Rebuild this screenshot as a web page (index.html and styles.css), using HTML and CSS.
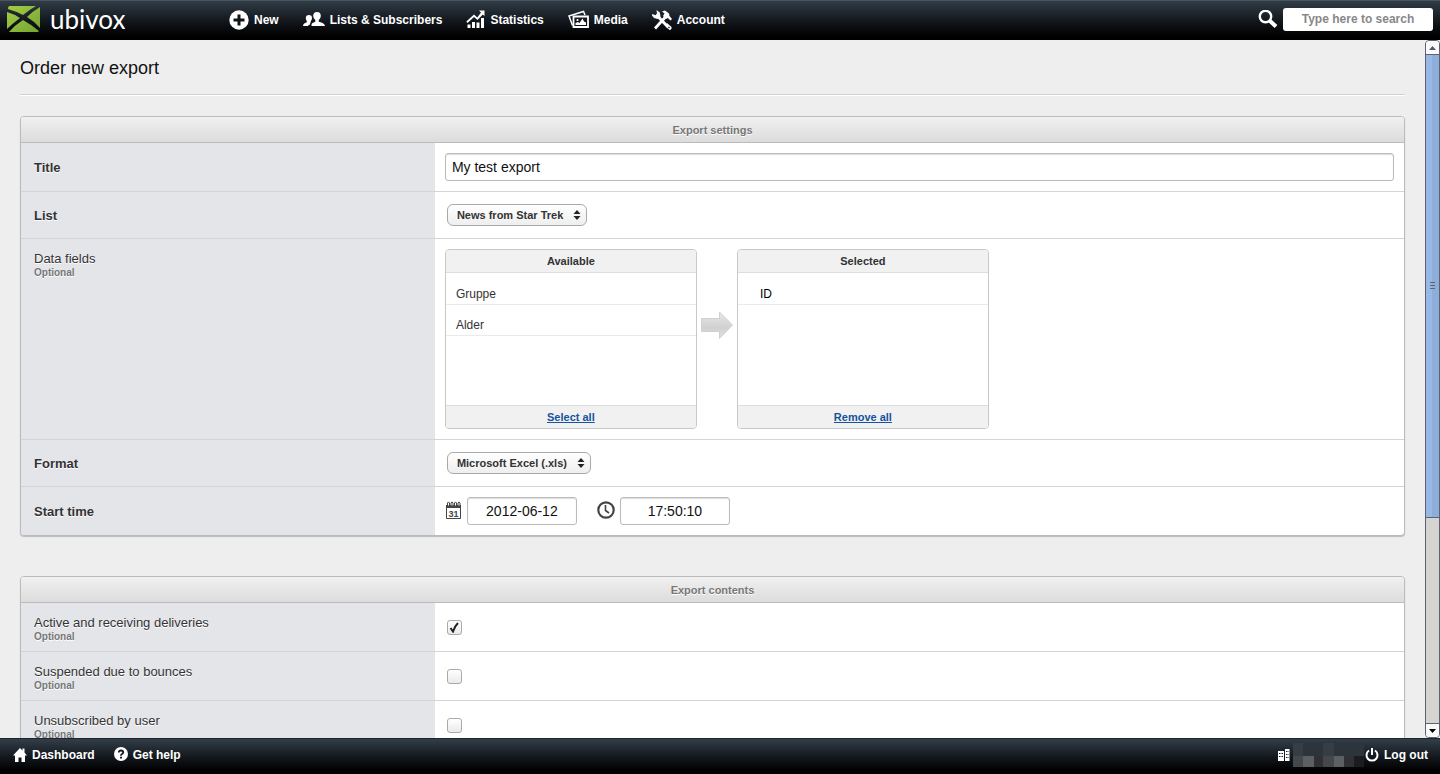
FILE: index.html
```html
<!DOCTYPE html>
<html lang="en">
<head>
    <meta charset="UTF-8">
    <meta name="viewport" content="width=device-width, initial-scale=1.0">
    <title>Order new export</title>
    <link rel="stylesheet" href="styles.css">
</head>
<body>
    <header class="topbar">
        <a href="#" class="logo">
            <svg width="36" height="28" viewBox="0 0 36 28">
                <defs>
                    <linearGradient id="leaf" x1="0" y1="0" x2="1" y2="1">
                        <stop offset="0" stop-color="#a5cd45"/>
                        <stop offset="1" stop-color="#74a331"/>
                    </linearGradient>
                </defs>
                <path fill="url(#leaf)" d="M4 1H30Q23 5 17 10Q9 6 2 4Q2 1 4 1ZM34 2V23Q28 16 21 12Q27 6 34 2ZM1 7Q8 9 14 13Q6 19 1 24ZM3 27Q9 20 17 15Q26 20 33 26L32 27Z"/>
            </svg>
            <span>ubivox</span>
        </a>
        <nav class="menu">
            <a href="#">
                <svg width="20" height="20" viewBox="0 0 20 20"><circle cx="10" cy="10" r="9.700" fill="#fff"/><path d="M10 4.500V15.500M4.500 10H15.500" stroke="#10151a" stroke-width="3"/></svg>
                New
            </a>
            <a href="#">
                <svg width="22" height="20" viewBox="0 0 22 20" fill="#fff"><path d="M8.500 16V14.500Q8.500 13 12.300 11.700V10Q10.200 8.500 10.200 6Q10.200 2 14 2T17.800 6Q17.800 8.500 15.800 10V11.700Q21.800 13 22 16Z"/><path d="M0 16Q0 13.500 3.800 12.300V11Q2.800 10 2.800 8Q2.800 5 6 5Q9 5 9 8Q9 10 7.800 11V12Q7 12.800 7 14.500Q5.500 14.500 5 16Z"/></svg>
                Lists &amp; Subscribers
            </a>
            <a href="#">
                <svg width="19" height="20" viewBox="0 0 19 20"><path fill="#fff" d="M1.500 14.500H4.500V18H1.500ZM6 12H9V18H6ZM10.500 12.500H13.500V18H10.500ZM15 8H18V18H15ZM13 .5H18.500V6L16.800 4.500L11.500 10L8 7L1.500 13L.3 11.500L8 4.500L11.300 7.500L15 2.500Z"/></svg>
                Statistics
            </a>
            <a href="#">
                <svg width="21" height="20" viewBox="0 0 21 20" fill="none" stroke="#fff" stroke-width="1.500"><path d="M4.500 15.500L1 6L15.500 1.500L17 5"/><path d="M5.500 6.500H20V17H5.500Z" stroke-width="1.800"/><path fill="#fff" stroke="none" d="M7.500 15V13L10 12L11.500 13L14.500 8.500L16 11.500L18 12.500V15Z"/><circle cx="9.500" cy="10" r="1.100" fill="#fff" stroke="none"/></svg>
                Media
            </a>
            <a href="#">
                <svg width="20" height="20" viewBox="0 0 20 20" fill="none" stroke="#fff"><path stroke-width="3" d="M5.500 6L16.500 17.500"/><path stroke-width="2.800" d="M13 7.500L3 18.500"/><path fill="#fff" stroke="none" d="M4.500 0L7.800 2.500L8.500 6.500L5.500 9L2 8L0 5.500L.2 4L3.500 5.200L5 3.500ZM10 1.500L13 .5L17 3.500L17.500 6L20 9L18.500 10.500L15.800 8L14 9L11 6L12.500 3.500ZM15 13L19.500 17Q20 19.500 17.500 20L13.500 16Z"/><circle cx="17" cy="17.500" r=".8" fill="#111" stroke="none"/></svg>
                Account
            </a>
        </nav>
        <form class="search">
            <label for="search" aria-label="Search">
                <svg width="20" height="20" viewBox="0 0 20 20" fill="none" stroke="#fff"><circle cx="7.500" cy="6.500" r="5.700" stroke-width="2.400"/><path d="M12 11L18 16.500" stroke-width="4"/></svg>
            </label>
            <input type="text" id="search" placeholder="Type here to search">
        </form>
    </header>

    <div class="viewport">
        <main class="content">
            <h1>Order new export</h1>

            <section class="panel">
                <h2>Export settings</h2>
                <div class="row">
                    <label class="name required" for="title">Title</label>
                    <div class="field"><input type="text" class="text" id="title" value="My test export"></div>
                </div>
                <div class="row">
                    <label class="name required" for="list">List</label>
                    <div class="field">
                        <div class="select">
                            <select id="list"><option>News from Star Trek</option></select>
                            <svg width="8" height="10" viewBox="0 0 8 10"><path fill="#222" d="M4 0L7.500 4H.5ZM4 10L.5 6H7.500Z"/></svg>
                        </div>
                    </div>
                </div>
                <div class="row">
                    <div class="name">Data fields<small>Optional</small></div>
                    <div class="field picker">
                        <div class="box">
                            <h3>Available</h3>
                            <ul>
                                <li>Gruppe</li>
                                <li>Alder</li>
                            </ul>
                            <footer><a href="#">Select all</a></footer>
                        </div>
                        <svg class="arrow" width="32" height="28" viewBox="0 0 32 28">
                            <defs>
                                <linearGradient id="arrow" x1="0" y1="0" x2="0" y2="1">
                                    <stop offset="0" stop-color="#e8e8e8"/>
                                    <stop offset=".6" stop-color="#d0d0d0"/>
                                    <stop offset="1" stop-color="#e2e2e2"/>
                                </linearGradient>
                            </defs>
                            <path fill="url(#arrow)" stroke="#d0d0d0" d="M.5 7.500H18.500V1L31.500 14L18.500 27.500V20.500H.5Z"/>
                        </svg>
                        <div class="box chosen">
                            <h3>Selected</h3>
                            <ul>
                                <li>ID</li>
                            </ul>
                            <footer><a href="#">Remove all</a></footer>
                        </div>
                    </div>
                </div>
                <div class="row">
                    <label class="name required" for="format">Format</label>
                    <div class="field">
                        <div class="select">
                            <select id="format"><option>Microsoft Excel (.xls)</option></select>
                            <svg width="8" height="10" viewBox="0 0 8 10"><path fill="#222" d="M4 0L7.500 4H.5ZM4 10L.5 6H7.500Z"/></svg>
                        </div>
                    </div>
                </div>
                <div class="row">
                    <label class="name required" for="date">Start time</label>
                    <div class="field start">
                        <label for="date" aria-label="Date">
                            <svg width="17" height="22" viewBox="0 0 17 22"><path fill="none" stroke="#444" d="M1.500 6.500H15.500V18.500H1.500Z"/><path fill="#444" d="M1 5H16V8H1Z"/><path fill="#fff" stroke="#444" d="M2.500 6V3Q3.500 .8 4.500 3V6ZM6 6V3Q7 .8 8 3V6ZM9.500 6V3Q10.500 .8 11.500 3V6ZM13 6V3Q14 .8 15 3V6Z"/><text x="8.500" y="17" text-anchor="middle" class="day">31</text></svg>
                        </label>
                        <input type="text" class="text" id="date" value="2012-06-12">
                        <label for="time" aria-label="Time">
                            <svg width="18" height="22" viewBox="0 0 18 22" fill="none" stroke="#444"><circle cx="9" cy="10" r="7.700" stroke-width="2.200"/><path d="M8.500 5V10.500L12 13" stroke-width="1.600"/></svg>
                        </label>
                        <input type="text" class="text" id="time" value="17:50:10">
                    </div>
                </div>
            </section>

            <section class="panel">
                <h2>Export contents</h2>
                <div class="row">
                    <label class="name" for="active">Active and receiving deliveries<small>Optional</small></label>
                    <div class="field">
                        <span class="check">
                            <input type="checkbox" id="active" checked>
                            <svg width="11" height="11" viewBox="0 0 11 11"><path fill="none" stroke="#222" stroke-width="2" d="M1.500 6L4 9.500Q5.500 4.500 9 1"/></svg>
                        </span>
                    </div>
                </div>
                <div class="row">
                    <label class="name" for="bounced">Suspended due to bounces<small>Optional</small></label>
                    <div class="field"><span class="check"><input type="checkbox" id="bounced"></span></div>
                </div>
                <div class="row">
                    <label class="name" for="unsubscribed">Unsubscribed by user<small>Optional</small></label>
                    <div class="field"><span class="check"><input type="checkbox" id="unsubscribed"></span></div>
                </div>
            </section>
        </main>

        <div class="scrollbar">
            <div class="step"><svg width="7" height="4" viewBox="0 0 7 4"><path fill="#555a66" d="M0 4L3.500 0L7 4Z"/></svg></div>
            <div class="thumb"><i></i><i></i><i></i></div>
            <div class="track"></div>
            <div class="step"><svg width="7" height="4" viewBox="0 0 7 4"><path fill="#000" d="M0 0H7L3.500 4Z"/></svg></div>
        </div>
    </div>

    <footer class="bottombar">
        <a href="#">
            <svg width="14" height="16" viewBox="0 0 14 16"><path fill="#fff" d="M7 1L9.500 3.500V1.500H11.500V5.500L14 8.500H12V15H8.500V10.500H5.500V15H2V8.500H0Z"/></svg>
            Dashboard
        </a>
        <a href="#">
            <svg width="14" height="16" viewBox="0 0 14 16"><circle cx="7" cy="7" r="7" fill="#fff"/><path d="M4.800 5.500Q4.800 3.500 7 3.500T9.200 5.300Q9.200 6.300 8 7T7 8.700" fill="none" stroke="#14191f" stroke-width="1.800"/><path d="M6 9.700H8V11.500H6Z" fill="#14191f"/></svg>
            Get help
        </a>
        <div class="account">
            <svg width="12" height="14" viewBox="0 0 12 14"><path fill="#fff" d="M0 3H6V13H0ZM7 1H11.500V13H7Z"/><path stroke="#14191f" d="M1 5.500H5M1 8.500H5M8 3.500H11M8 6.500H11M8 9.500H11" stroke-dasharray="1.500 1"/></svg>
            <svg width="71" height="24" viewBox="0 0 71 24" shape-rendering="crispEdges">
                <path fill="#373d44" d="M0 0H10V13H0ZM30 0H41V13H30Z"/>
                <path fill="#2c343c" d="M10 0H30V13H10ZM41 0H71V13H41Z"/>
                <path fill="#44474b" d="M0 13H10V24H0ZM30 13H41V24H30Z"/>
                <path fill="#5d6063" d="M10 13H21V24H10ZM41 13H51V24H41Z"/>
                <path fill="#303134" d="M21 13H30V24H21ZM51 13H61V24H51Z"/>
                <path fill="#1a1c20" d="M61 13H71V24H61Z"/>
            </svg>
        </div>
        <a href="#">
            <svg width="14" height="16" viewBox="0 0 14 16" fill="none" stroke="#fff" stroke-width="2"><path d="M4 3.500A5.500 5.500 0 1 0 10 3.500M7 1V8"/></svg>
            Log out
        </a>
    </footer>
</body>
</html>
```
FILE: styles.css
```css
:root {
    --line: #d4d4d6;
    --border: #bbb;
    --label-bg: #e4e5e9;
    --text: #333;
}
* {
    box-sizing: border-box;
}
body {
    margin: 0;
    height: 100vh;
    display: flex;
    flex-direction: column;
    font: 13px "Liberation Sans", Arial, sans-serif;
    color: var(--text);
    background-color: #eee;
}
svg {
    display: block;
    flex: none;
}
input, select {
    font: inherit;
    color: inherit;
    margin: 0;
}

/* top bar */
.topbar {
    display: flex;
    align-items: center;
    height: 40px;
    flex: none;
    padding: 0 7px 1px 6px;
    background: linear-gradient(#323e48, #14191f 50%, #000 90%);
    box-shadow: inset 0 1px 0 #44545f;
}
.topbar a, .bottombar a {
    display: flex;
    align-items: center;
    gap: 5px;
    color: #fff;
    font-size: 12px;
    font-weight: bold;
    text-decoration: none;
    white-space: nowrap;
}
.topbar .logo {
    width: 223px;
    padding-bottom: 2px;
    gap: 8px;
    font: 26px Lato, sans-serif;
    line-height: 28px;
}
.menu {
    display: flex;
    gap: 24px;
}
.search {
    display: flex;
    align-items: center;
    gap: 5px;
    margin-left: auto;
}
.search input {
    width: 150px;
    height: 23px;
    padding: 0 8px 2px;
    border: 0;
    border-radius: 3px;
    background-color: #fff;
    font-size: 12px;
    font-weight: bold;
    text-align: center;
}
.search input::placeholder {
    color: #888;
}

/* page */
.viewport {
    flex: 1;
    min-height: 0;
    display: flex;
}
.content {
    flex: 1;
    overflow: hidden;
    padding: 17px 20px 0;
}
h1 {
    margin: 0 0 21px;
    padding-bottom: 15px;
    font-size: 18px;
    line-height: 22px;
    font-weight: normal;
    color: #111;
    border-bottom: 1px solid #d0d0d0;
    box-shadow: 0 1px 0 #fff;
}
.panel {
    margin-bottom: 40px;
    border: 1px solid var(--border);
    border-radius: 4px;
    overflow: hidden;
    background-color: #fff;
    box-shadow: 0 1px 1px #bbb;
}
.panel h2 {
    margin: 0;
    padding-top: 2px;
    font-size: 11px;
    line-height: 23px;
    text-align: center;
    color: #777;
    text-shadow: 0 1px 0 #fff;
    background: linear-gradient(#f0f0f0, #dcdcdc);
    border-bottom: 1px solid var(--border);
}
.row {
    display: grid;
    grid-template-columns: calc(30% - 1px) 1fr;
    border-bottom: 1px solid var(--line);
}
.row:last-child {
    border-bottom: 0;
}
.name {
    padding: 11px 13px 9px;
    line-height: 18px;
    background-color: var(--label-bg);
    text-shadow: 0 1px 0 #fff;
}
.required {
    display: flex;
    align-items: center;
    font-weight: bold;
}
.name small {
    display: block;
    font-size: 10px;
    line-height: 10px;
    font-weight: bold;
    color: #777;
}
.field {
    display: flex;
    align-items: center;
    padding: 10px;
}
.text {
    width: 100%;
    height: 28px;
    padding: 0 6px;
    border: 1px solid var(--border);
    border-radius: 3px;
    background-color: #fff;
    box-shadow: inset 0 1px 1px #ddd;
    font-size: 14px;
    color: #111;
}
.start .text {
    width: 110px;
    margin: 0 20px 0 5px;
    text-align: center;
}
.day {
    font-size: 9px;
    font-weight: bold;
    fill: #444;
}
.select {
    position: relative;
    margin: 2px;
}
.select select {
    appearance: none;
    display: block;
    height: 22px;
    padding: 0 22px 0 9px;
    border: 1px solid #aaa;
    border-radius: 6px;
    background: linear-gradient(#fff, #eee);
    font-size: 11px;
    font-weight: bold;
}
.select svg {
    position: absolute;
    right: 6px;
    top: 6px;
    pointer-events: none;
}

/* field picker */
.picker {
    gap: 4px;
}
.arrow {
    margin-bottom: 28px;
}
.box {
    display: flex;
    flex-direction: column;
    width: 252px;
    height: 180px;
    border: 1px solid #c8c8c8;
    border-radius: 4px;
    overflow: hidden;
    font-size: 12px;
}
.box h3, .box footer {
    margin: 0;
    font-size: 11px;
    line-height: 22px;
    font-weight: bold;
    text-align: center;
    background-color: #f1f1f1;
}
.box h3 {
    border-bottom: 1px solid #ddd;
}
.box footer {
    border-top: 1px solid #ddd;
}
.box a {
    color: #15549c;
}
.box ul {
    flex: 1;
    margin: 0;
    padding: 1px 0 0;
    list-style: none;
}
.box li {
    padding: 12px 10px 2px;
    line-height: 16px;
    border-bottom: 1px solid #eaeaea;
}
.chosen li {
    padding-left: 22px;
    color: #000;
}

/* checkboxes */
.check {
    position: relative;
    margin-left: 2px;
}
.check input {
    appearance: none;
    display: block;
    width: 15px;
    height: 15px;
    border: 1px solid #aaa;
    border-radius: 3px;
    background: linear-gradient(#fff, #eaeaea);
}
.check svg {
    position: absolute;
    left: 2px;
    top: 2px;
    pointer-events: none;
}

/* scrollbar */
.scrollbar {
    display: flex;
    flex-direction: column;
    width: 15px;
    border: 1px solid #5d6270;
    border-radius: 4px;
    overflow: hidden;
    background-color: #d5d4d1;
}
.step {
    display: flex;
    align-items: center;
    justify-content: center;
    height: 13px;
    background-color: #fafafa;
}
.thumb {
    flex: 463;
    display: flex;
    flex-direction: column;
    align-items: center;
    justify-content: center;
    gap: 2px;
    border: solid #5d6270;
    border-width: 1px 0;
    background: linear-gradient(to right, #98b8e6 50%, #8dadda 50%);
}
.thumb i {
    width: 5px;
    height: 1px;
    background-color: #5d6270;
}
.track {
    flex: 206;
    border-bottom: 1px solid #5d6270;
}

/* bottom bar */
.bottombar {
    display: flex;
    align-items: center;
    gap: 19px;
    height: 36px;
    flex: none;
    padding: 0 12px 3px 13px;
    background: linear-gradient(#323e48, #14191f 50%, #000 90%);
    border-top: 1px solid #1c2530;
}
.account {
    display: flex;
    align-items: center;
    gap: 3px;
    margin: 0 -18px 0 auto;
}
```
